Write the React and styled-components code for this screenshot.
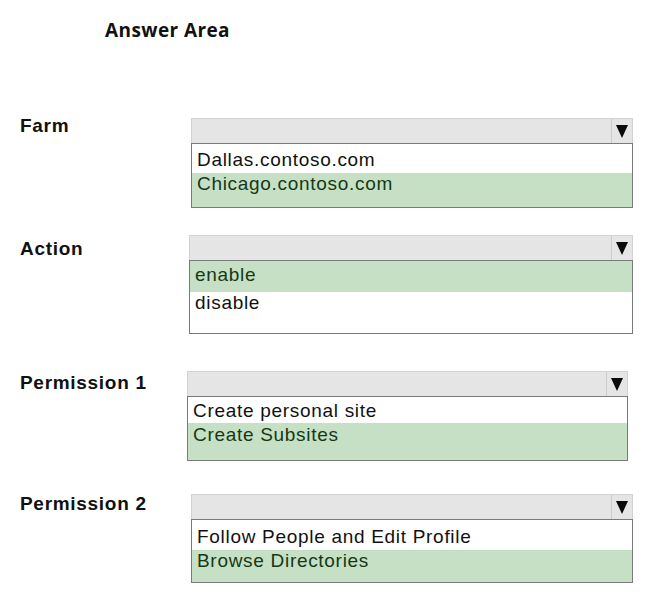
import styled, { createGlobalStyle } from "styled-components";

const GlobalStyle = createGlobalStyle`
  html, body {
    margin: 0;
    padding: 0;
    background: #ffffff;
  }
  body {
    font-family: "Liberation Sans", Arial, sans-serif;
    color: #111111;
  }
`;

const App = () => {
  return (
    <Page>
      <GlobalStyle />
      <Title>Answer Area</Title>
      {questions.map((q) => (
        <Section key={q.label} $gap={q.gap}>
          <Label $shift={q.labelShift}>{q.label}</Label>
          <Dropdown $offset={q.offset} $width={q.width}>
            <Header>
              <HeaderField />
              <ArrowCell>
                <svg width="12" height="13" viewBox="0 0 12 13">
                  <polygon points="0,0 12,0 6,13" fill="#0a0a0a" />
                </svg>
              </ArrowCell>
            </Header>
            <OptionList>
              {q.options.map((opt) => (
                <Option
                  key={opt.text}
                  $selected={opt.selected}
                  $height={opt.height}
                  $pad={opt.pad}
                >
                  {opt.text}
                </Option>
              ))}
            </OptionList>
          </Dropdown>
        </Section>
      ))}
    </Page>
  );
};

export default App;

// Styled Components
const Page = styled.div`
  width: 653px;
  height: 601px;
  padding-top: 19px;
  box-sizing: border-box;
  display: flex;
  flex-direction: column;
  overflow: hidden;
`;

const Title = styled.h1`
  margin: 0 0 0 105px;
  font-family: "Open Sans", "Liberation Sans", sans-serif;
  font-size: 19px;
  line-height: 23px;
  font-weight: 700;
  letter-spacing: 0.4px;
  color: #111111;
`;

const Section = styled.div`
  display: flex;
  align-items: flex-start;
  margin-top: ${(p) => p.$gap}px;
  padding-left: 20px;
`;

const Label = styled.div`
  width: 171px;
  flex: none;
  margin-top: ${(p) => p.$shift}px;
  font-size: 19px;
  line-height: 22px;
  font-weight: 700;
  letter-spacing: 0.7px;
  color: #111111;
`;

const Dropdown = styled.div`
  width: ${(p) => p.$width}px;
  margin-left: ${(p) => p.$offset}px;
  display: flex;
  flex-direction: column;
`;

const Header = styled.div`
  height: 25px;
  box-sizing: border-box;
  display: flex;
  background: #e5e5e5;
  border: 1px solid #d2d2d2;
  border-bottom: none;
`;

const HeaderField = styled.div`
  flex: 1;
`;

const ArrowCell = styled.div`
  width: 20px;
  display: flex;
  align-items: center;
  justify-content: center;
  border-left: 1px solid #cdcdcd;
`;

const OptionList = styled.div`
  display: flex;
  flex-direction: column;
  border: 1.5px solid #7a7a7a;
  background: #ffffff;
`;

const Option = styled.div`
  height: ${(p) => p.$height}px;
  box-sizing: border-box;
  padding: ${(p) => p.$pad}px 0 0 5px;
  font-size: 19px;
  line-height: 22px;
  letter-spacing: 0.7px;
  white-space: nowrap;
  background: ${(p) => (p.$selected ? "#c5e0c4" : "#ffffff")};
  color: ${(p) => (p.$selected ? "#163816" : "#111111")};
`;

const questions = [
  {
    label: "Farm",
    gap: 76,
    labelShift: -3,
    offset: 0,
    width: 442,
    options: [
      { text: "Dallas.contoso.com", height: 29, pad: 5 },
      { text: "Chicago.contoso.com", height: 34, pad: 0, selected: true },
    ],
  },
  {
    label: "Action",
    gap: 27,
    labelShift: 3,
    offset: -2,
    width: 444,
    options: [
      { text: "enable", height: 31, pad: 3, selected: true },
      { text: "disable", height: 41, pad: 0 },
    ],
  },
  {
    label: "Permission 1",
    gap: 37,
    labelShift: 1,
    offset: -4,
    width: 441,
    options: [
      { text: "Create personal site", height: 26, pad: 3 },
      { text: "Create Subsites", height: 37, pad: 1, selected: true },
    ],
  },
  {
    label: "Permission 2",
    gap: 33,
    labelShift: -1,
    offset: 0,
    width: 442,
    options: [
      { text: "Follow People and Edit Profile", height: 30, pad: 6 },
      { text: "Browse Directories", height: 32, pad: 0, selected: true },
    ],
  },
];
